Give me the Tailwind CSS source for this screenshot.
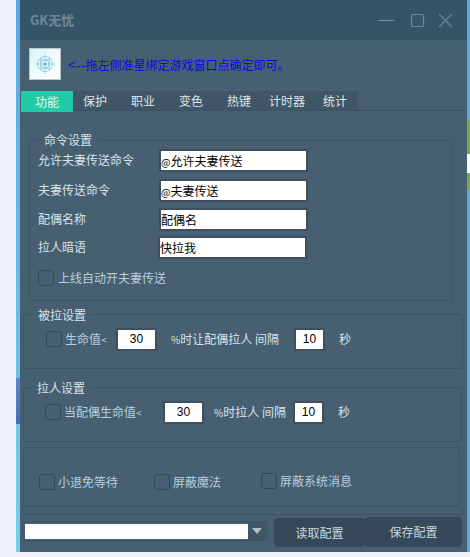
<!DOCTYPE html>
<html lang="zh">
<head>
  <meta charset="UTF-8" />
  <title>GK无忧</title>
  <script src="https://cdn.jsdelivr.net/npm/@tailwindcss/browser@4"></script>
</head>
<body class="bg-[#eef3fb] font-['Noto_Sans_CJK_SC','Liberation_Sans',sans-serif] text-[12px] leading-[16px] overflow-hidden">
  <div class="flex h-[552px] w-[470px]">
    <div class="w-[16px] shrink-0"></div>
    <div class="w-[4px] shrink-0 bg-gradient-to-b from-[#5aa9e2] to-[#72d0ea] relative">
      <div class="absolute left-0 top-[378px] w-[4px] h-[46px] bg-gradient-to-b from-[#5f86c8] to-[#4a6db5]"></div>
    </div>

    <!-- window -->
    <div class="w-[447px] shrink-0 bg-[#466071] flex flex-col text-[#d8e3ea]">
      <!-- title bar -->
      <div class="h-[40px] bg-[#35546a] flex items-center pl-[10px] pr-[15px]">
        <span class="text-[13px] font-bold text-[#6f8797] flex-1">GK无忧</span>
        <svg width="74" height="16" viewBox="0 0 74 16" fill="none" stroke="#6f8797" stroke-width="1.2">
          <path d="M0 8.5H16"/>
          <rect x="33.5" y="2.5" width="12" height="12" rx="1"/>
          <path d="M61 2L74 15M74 2L61 15"/>
        </svg>
      </div>

      <!-- hint row -->
      <div class="h-[51px] flex items-center pl-[9px] pb-[3px]">
        <div class="w-[32px] h-[32px] bg-gradient-to-br from-[#d5f4fa] via-[#eefbfd] to-white border border-[#b9c4cb] flex items-center justify-center">
          <svg width="20" height="20" viewBox="0 0 20 20" fill="none" stroke="#8fd0dc" stroke-width="1">
            <circle cx="10" cy="10" r="7.5"/>
            <circle cx="10" cy="10" r="4"/>
            <path d="M10 0V20M0 10H20M5.5 4V16M14.5 4V16M4 5.5H16M4 14.5H16" stroke-width="0.8"/>
            <circle cx="10" cy="10" r="1.6" fill="#3cc2d6" stroke="none"/>
          </svg>
        </div>
        <span class="ml-[7px] text-[#0a0ae6]"><span class="text-[14px]">&lt;--</span>拖左侧准星绑定游戏窗口点确定即可<span class="font-['Noto_Sans_CJK_TC']">。</span></span>
      </div>

      <!-- tabs -->
      <div class="h-[20px] flex border-b border-[#3a5262] text-[#dce6ec]">
        <div class="w-[52px] ml-[1px] h-[21px] bg-[#22cba8] flex items-center justify-center text-[#e4f5f1]">功能</div>
        <div class="flex bg-[#3f5666] w-[285px] h-[19px] items-center">
          <span class="ml-[10px] w-[48px]">保护</span>
          <span class="w-[48px]">职业</span>
          <span class="w-[48px]">变色</span>
          <span class="w-[42px]">热键</span>
          <span class="w-[54px]">计时器</span>
          <span>统计</span>
        </div>
      </div>

      <!-- 命令设置 -->
      <div class="relative mt-[29px] ml-[9px] w-[424px] h-[161px] border border-[#3c5566] rounded-[3px] pl-[8px] pt-[8px]">
        <span class="absolute left-[9px] top-[-9px] px-[5px] bg-[#466071]">命令设置</span>
        <div class="flex items-center h-[22px]">
          <span class="w-[121px]">允许夫妻传送命令</span>
          <div class="w-[149px] h-[23px] bg-white border-2 border-[#3f4f5c] text-black leading-[19px]"><span class="text-[10px]">@</span>允许夫妻传送</div>
        </div>
        <div class="flex items-center h-[22px] mt-[8px]">
          <span class="w-[121px]">夫妻传送命令</span>
          <div class="w-[149px] h-[23px] bg-white border-2 border-[#3f4f5c] text-black leading-[19px]"><span class="text-[10px]">@</span>夫妻传送</div>
        </div>
        <div class="flex items-center h-[22px] mt-[7px]">
          <span class="w-[121px]">配偶名称</span>
          <div class="w-[149px] h-[23px] bg-white border-2 border-[#3f4f5c] text-black leading-[19px]">配偶名</div>
        </div>
        <div class="flex items-center h-[22px] mt-[6px]">
          <span class="w-[120px]">拉人暗语</span>
          <div class="w-[149px] h-[23px] bg-white border-2 border-[#3f4f5c] text-black leading-[19px]">快拉我</div>
        </div>
        <div class="flex items-center mt-[12px] text-[#b7cfdf]">
          <span class="w-[16px] h-[16px] border border-[#2e4a5c] rounded-[3px]"></span>
          <span class="ml-[4px]">上线自动开夫妻传送</span>
        </div>
      </div>

      <!-- 被拉设置 -->
      <div class="relative mt-[13px] ml-[3px] w-[440px] h-[55px] border border-[#3c5566] rounded-[3px] pl-[22px] pt-[13px]">
        <span class="absolute left-[9px] top-[-8px] px-[5px] bg-[#466071]">被拉设置</span>
        <div class="flex items-center h-[22px]">
          <span class="w-[16px] h-[16px] border border-[#2e4a5c] rounded-[3px]"></span>
          <span class="ml-[3px] w-[51px] text-[#b7cfdf]">生命值<span class="text-[10px]">&lt;</span></span>
          <div class="w-[41px] h-[23px] bg-white border-2 border-[#3f4f5c] text-black text-center font-['Liberation_Sans'] leading-[19px]">30</div>
          <span class="ml-[14px] w-[84px]"><span class="text-[10px]">%</span>时让配偶拉人</span>
          <span class="w-[39px]">间隔</span>
          <div class="w-[31px] h-[23px] bg-white border-2 border-[#3f4f5c] text-black text-center font-['Liberation_Sans'] leading-[19px]">10</div>
          <span class="ml-[14px]">秒</span>
        </div>
      </div>

      <!-- 拉人设置 -->
      <div class="relative mt-[18px] ml-[3px] w-[439px] h-[55px] border border-[#3c5566] rounded-[3px] pl-[21px] pt-[13px]">
        <span class="absolute left-[8px] top-[-8px] px-[5px] bg-[#466071]">拉人设置</span>
        <div class="flex items-center h-[22px]">
          <span class="w-[16px] h-[16px] border border-[#2e4a5c] rounded-[3px]"></span>
          <span class="ml-[3px] w-[99px] text-[#b7cfdf]">当配偶生命值<span class="text-[10px]">&lt;</span></span>
          <div class="w-[41px] h-[23px] bg-white border-2 border-[#3f4f5c] text-black text-center font-['Liberation_Sans'] leading-[19px]">30</div>
          <span class="ml-[10px] w-[48px]"><span class="text-[10px]">%</span>时拉人</span>
          <span class="w-[31px]">间隔</span>
          <div class="w-[31px] h-[23px] bg-white border-2 border-[#3f4f5c] text-black text-center font-['Liberation_Sans'] leading-[19px]">10</div>
          <span class="ml-[14px]">秒</span>
        </div>
      </div>

      <!-- options -->
      <div class="mt-[5px] ml-[3px] w-[437px] h-[60px] border border-[#3c5566] rounded-[3px] pl-[15px] flex items-center pt-[9px] text-[#b7cfdf]">
        <span class="w-[16px] h-[16px] border border-[#2e4a5c] rounded-[3px]"></span>
        <span class="ml-[3px] w-[96px]">小退免等待</span>
        <span class="w-[16px] h-[16px] border border-[#2e4a5c] rounded-[3px]"></span>
        <span class="ml-[3px] w-[88px]">屏蔽魔法</span>
        <span class="w-[16px] h-[16px] border border-[#2e4a5c] rounded-[3px] mb-[2px]"></span>
        <span class="ml-[3px] mb-[2px]">屏蔽系统消息</span>
      </div>
      <div class="ml-[2px] w-[441px] h-[8px] border-b border-l border-r border-[#3c5566] rounded-b-[3px]"></div>

      <!-- bottom bar -->
      <div class="flex mt-[2px] ml-[2px]">
        <div class="mt-[4px] w-[246px] h-[20px] border border-[#3c5566] flex items-center pl-[2px] pr-[1px]">
          <div class="flex-1 h-[15px] bg-white"></div>
          <div class="w-[18px] h-[18px] bg-[#3f5666] flex items-center justify-center">
            <svg width="10" height="6" viewBox="0 0 10 6"><path d="M0 0H10L5 6Z" fill="#b5bfc6"/></svg>
          </div>
        </div>
        <div class="ml-[6px] mt-[1px] w-[91px] h-[29px] bg-[#35495a] rounded-[4px] flex items-center justify-center text-[#c9d6de]">读取配置</div>
        <div class="w-[97px] h-[30px] bg-[#35495a] rounded-[4px] flex items-center justify-center text-[#c9d6de]">保存配置</div>
      </div>
    </div>

    <!-- desktop sliver on the right -->
    <div class="w-[3px] shrink-0 flex flex-col">
      <div class="h-[120px] bg-[#5aa9e2]"></div>
      <div class="h-[34px] bg-[#7aa850]"></div>
      <div class="h-[19px] bg-white"></div>
      <div class="h-[17px] bg-[#7aa850]"></div>
      <div class="flex-1 bg-[#5aa9e2]"></div>
    </div>
  </div>
</body>
</html>
